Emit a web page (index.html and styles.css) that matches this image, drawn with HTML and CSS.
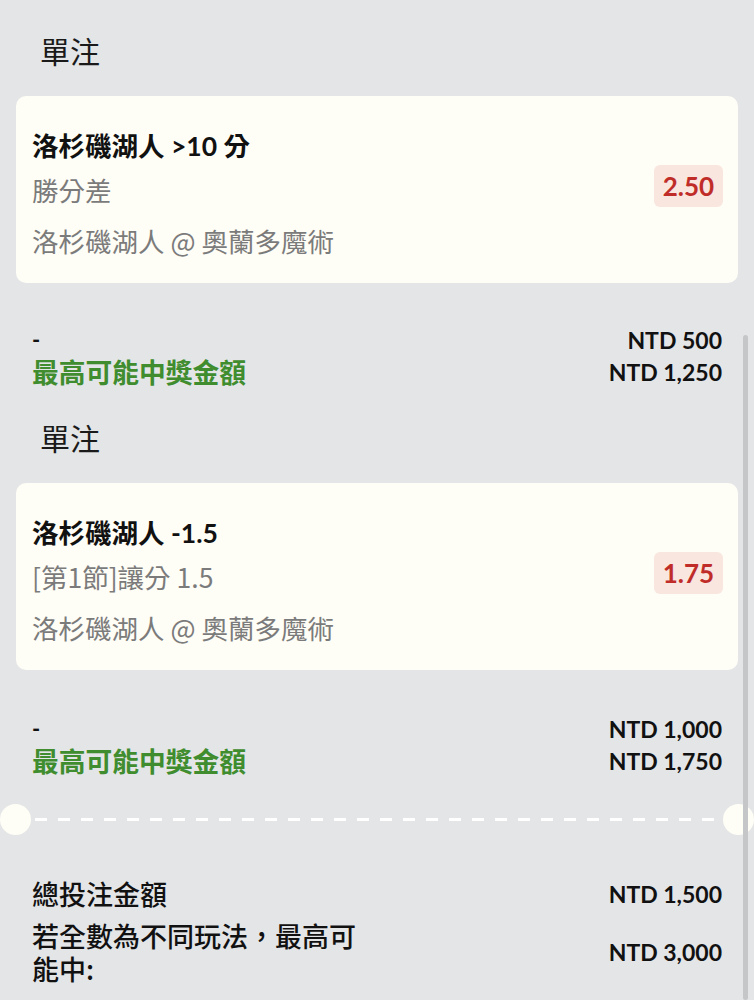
FILE: index.html
```html
<!DOCTYPE html>
<html lang="zh-Hant">
<head>
<meta charset="utf-8">
<title>投注單</title>
<link rel="stylesheet" href="styles.css">
</head>
<body>
<div class="page">
  <section class="bet">
    <h2 class="heading">單注</h2>
    <div class="card">
      <div class="info">
        <div class="title">洛杉磯湖人 &gt;10 分</div>
        <div class="market">勝分差</div>
        <div class="match">洛杉磯湖人 @ 奧蘭多魔術</div>
      </div>
      <div class="odds">2.50</div>
    </div>
    <div class="summary">
      <div class="labels">
        <div class="dash">-</div>
        <div class="win">最高可能中獎金額</div>
      </div>
      <div class="amounts">
        <div>NTD 500</div>
        <div>NTD 1,250</div>
      </div>
    </div>
  </section>

  <section class="bet">
    <h2 class="heading">單注</h2>
    <div class="card">
      <div class="info">
        <div class="title">洛杉磯湖人 -1.5</div>
        <div class="market">[第1節]讓分 1.5</div>
        <div class="match">洛杉磯湖人 @ 奧蘭多魔術</div>
      </div>
      <div class="odds">1.75</div>
    </div>
    <div class="summary second">
      <div class="labels">
        <div class="dash">-</div>
        <div class="win">最高可能中獎金額</div>
      </div>
      <div class="amounts">
        <div>NTD 1,000</div>
        <div>NTD 1,750</div>
      </div>
    </div>
  </section>

  <div class="separator">
    <span class="notch"></span>
    <span class="dashes"></span>
    <span class="notch"></span>
  </div>

  <div class="totals">
    <div class="total-row">
      <div class="total-label">總投注金額</div>
      <div class="total-value">NTD 1,500</div>
    </div>
    <div class="total-row">
      <div class="total-label wrap">若全數為不同玩法，最高可能中:</div>
      <div class="total-value">NTD 3,000</div>
    </div>
  </div>

  <div class="scrollbar"></div>
</div>
</body>
</html>
```

FILE: styles.css
```css
html, body {
  margin: 0;
  padding: 0;
  background: #e4e5e7;
}

body {
  font-family: Lato, "Noto Sans CJK TC", sans-serif;
  color: #111;
  width: 754px;
  height: 1000px;
  overflow: hidden;
}

.page {
  position: relative;
  padding-top: 1px;
  height: 999px;
}

.heading {
  margin: 29px 0 0 40px;
  font-family: "Noto Sans CJK TC", sans-serif;
  font-size: 30px;
  font-weight: 400;
  line-height: 40px;
  color: #1a1a1a;
}

.card {
  margin: 26px 16px 0 16px;
  height: 187px;
  box-sizing: border-box;
  padding: 28px 15px 0 16px;
  background: #fefdf6;
  border-radius: 10px;
  display: flex;
  justify-content: space-between;
  align-items: flex-start;
}

.info {
  display: flex;
  flex-direction: column;
}

.title {
  font-family: Lato, "Noto Sans CJK TC", sans-serif;
  font-size: 26.5px;
  font-weight: 700;
  line-height: 44px;
  color: #111;
}

.market,
.match {
  font-family: "Noto Sans CJK TC", sans-serif;
  font-size: 26.5px;
  font-weight: 400;
  line-height: 44px;
  color: #7b7b7b;
}

.match {
  margin-top: 7px;
}

.odds {
  margin-top: 41px;
  width: 69px;
  height: 42px;
  border-radius: 6px;
  background: #f9e6df;
  color: #c02d29;
  font-family: Lato, sans-serif;
  font-size: 26px;
  font-weight: 700;
  display: flex;
  align-items: center;
  justify-content: center;
}

.summary {
  margin: 41px 32px 0 32px;
  display: flex;
  justify-content: space-between;
  line-height: 32px;
}

.summary.second {
  margin-top: 43px;
}

.dash {
  font-family: Lato, sans-serif;
  font-size: 22px;
  font-weight: 700;
  color: #111;
}

.win {
  font-family: "Noto Sans CJK TC", sans-serif;
  font-size: 26.75px;
  font-weight: 700;
  color: #3f8d2e;
}

.amounts {
  text-align: right;
  font-family: Lato, sans-serif;
  font-size: 23px;
  font-weight: 700;
  color: #111;
}

.separator {
  margin-top: 27px;
  height: 30px;
  display: flex;
  align-items: center;
}

.notch {
  width: 31px;
  height: 31px;
  border-radius: 50%;
  background: #fefdf6;
  flex: none;
}

.dashes {
  flex: 1;
  height: 3px;
  margin: 0 4px;
  background: repeating-linear-gradient(90deg, #ffffff 0 12px, transparent 12px 23px);
}

.totals {
  margin: 43px 32px 0 32px;
  display: flex;
  flex-direction: column;
  gap: 9px;
}

.total-row {
  display: flex;
  justify-content: space-between;
  align-items: center;
}

.total-label {
  font-family: "Noto Sans CJK TC", sans-serif;
  font-size: 27px;
  font-weight: 500;
  line-height: 33px;
  color: #111;
}

.total-label.wrap {
  width: 340px;
}

.total-value {
  font-family: Lato, sans-serif;
  font-size: 23px;
  font-weight: 700;
  color: #111;
}

.scrollbar {
  position: absolute;
  left: 743px;
  top: 335px;
  width: 5px;
  bottom: 0;
  border-radius: 3px;
  background: #c5c6c8;
}
```
